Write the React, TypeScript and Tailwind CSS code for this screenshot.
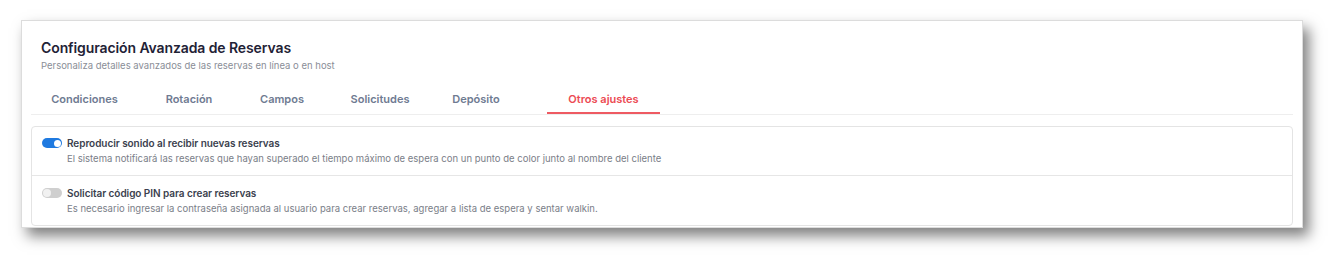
import React from "react";

const tabs = [
  { label: "Condiciones", w: "w-[107px]" },
  { label: "Rotación", w: "w-[102px]" },
  { label: "Campos", w: "w-[84px]" },
  { label: "Solicitudes", w: "w-[112px]" },
  { label: "Depósito", w: "w-[80px]" },
];

function Toggle({ on }: { on: boolean }) {
  return on ? (
    <div className="w-[20px] h-[10px] rounded-full bg-[#1f7ae0] flex items-center justify-end px-[1.5px] shrink-0">
      <div className="w-[7px] h-[7px] rounded-full bg-white" />
    </div>
  ) : (
    <div className="w-[20px] h-[10px] rounded-full bg-[#cfcfcf] flex items-center justify-start px-[1px] shrink-0">
      <div className="w-[8px] h-[8px] rounded-full bg-[#f1f1f1]" />
    </div>
  );
}

function Row({
  on,
  title,
  desc,
  last,
}: {
  on: boolean;
  title: string;
  desc: string;
  last?: boolean;
}) {
  return (
    <div
      className={
        "h-[49px] pl-[10px] " +
        (last ? "pt-[11px]" : "pt-[10px] border-b border-[#e6e6e6]")
      }
    >
      <div className="flex items-center gap-[5px] h-[12px]">
        <Toggle on={on} />
        <span className="text-[10px] leading-[12px] font-semibold text-[#3b3f4e] tracking-[-0.05px]">
          {title}
        </span>
      </div>
      <div className="pl-[25px] mt-[4px] text-[9.5px] leading-[12px] text-[#7a7e88] tracking-[0.01px]">
        {desc}
      </div>
    </div>
  );
}

export default function App() {
  return (
    <div
      className="w-[1344px] h-[269px] bg-white pt-[20px] pl-[21px]"
      style={{ fontFamily: "Inter, 'Open Sans', sans-serif" }}
    >
      <div className="w-[1282px] h-[208px] overflow-hidden bg-white border border-[#dcdcdc] shadow-[6px_8px_13px_rgba(0,0,0,0.5)]">
        <div className="pl-[19px] pt-[18px]">
          <div className="text-[14px] leading-[18px] font-semibold text-[#1f2236] tracking-[-0.1px]">
            Configuración Avanzada de Reservas
          </div>
          <div className="mt-[3px] text-[9.5px] leading-[12px] text-[#8a8e97]">
            Personaliza detalles avanzados de las reservas en línea o en host
          </div>
        </div>
        <div className="mx-[9px] mt-[15px] flex border-b border-[#eeeeee] h-[28px]">
          {tabs.map((t) => (
            <div
              key={t.label}
              className={t.w + " flex justify-center pt-[5px] text-[11px] leading-[14px] font-semibold text-[#6f7b92]"}
            >
              {t.label}
            </div>
          ))}
          <div className="w-[31px]" />
          <div className="w-[113px] flex justify-center pt-[5px] text-[11px] leading-[14px] font-semibold text-[#ec4a53] border-b-2 border-[#ee5a62]">
            Otros ajustes
          </div>
        </div>
        <div className="mx-[9px] mt-[11px] border border-[#e4e4e4] rounded-[4px]">
          <Row
            on
            title="Reproducir sonido al recibir nuevas reservas"
            desc="El sistema notificará las reservas que hayan superado el tiempo máximo de espera con un punto de color junto al nombre del cliente"
          />
          <Row
            on={false}
            last
            title="Solicitar código PIN para crear reservas"
            desc="Es necesario ingresar la contraseña asignada al usuario para crear reservas, agregar a lista de espera y sentar walkin."
          />
        </div>
      </div>
    </div>
  );
}
